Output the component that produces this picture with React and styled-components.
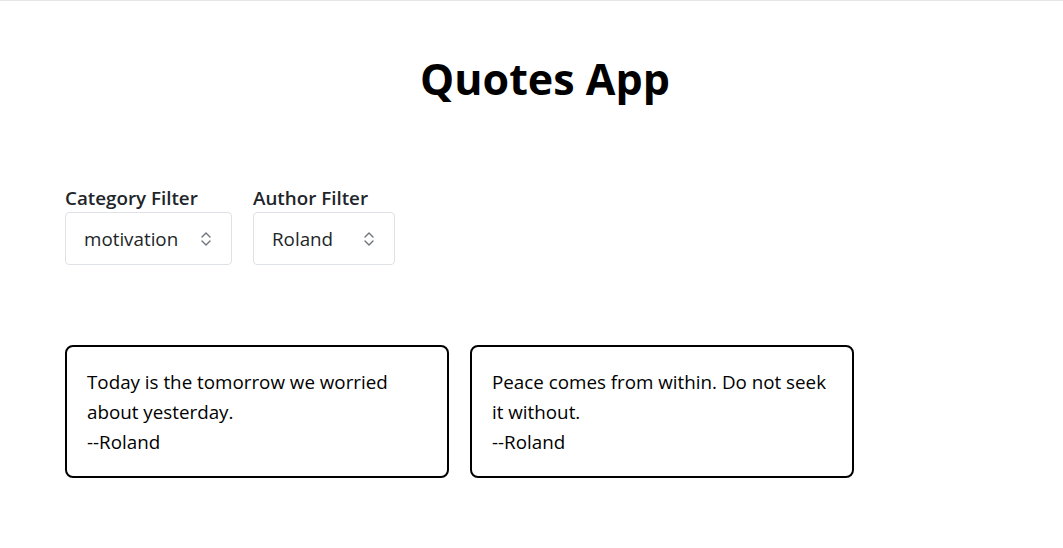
import React, { useState } from 'react';
import styled, { createGlobalStyle } from 'styled-components';

const GlobalStyle = createGlobalStyle`
  body {
    margin: 0;
    background: #fff;
    font-family: "Open Sans", "Noto Sans", sans-serif;
    color: #212529;
  }
`;

const quotes = [
  { id: 1, text: 'Today is the tomorrow we worried about yesterday.', author: 'Roland', category: 'motivation' },
  { id: 2, text: 'Peace comes from within. Do not seek it without.', author: 'Roland', category: 'motivation' },
];

const Page = styled.div`
  border-top: 1px solid #e6e6e6;
  padding: 0 38px 0 65px;
  min-height: 547px;
`;

const Title = styled.h1`
  margin: 0;
  padding-top: 48px;
  text-align: center;
  font-size: 43px;
  font-weight: 700;
  color: #000;
  line-height: 60px;
`;

const Filters = styled.div`
  display: flex;
  gap: 21px;
  margin-top: 78px;
`;

const FilterGroup = styled.div`
  display: flex;
  flex-direction: column;
  gap: 3px;
`;

const Label = styled.label`
  font-size: 18.8px;
  font-weight: 600;
  line-height: 22px;
  color: #212529;
`;

const SelectWrap = styled.div`
  position: relative;
  width: ${p => p.width}px;
`;

const Select = styled.select`
  appearance: none;
  width: 100%;
  height: 53px;
  padding: 0 36px 0 18px;
  font-family: inherit;
  font-size: 18.8px;
  color: #212529;
  background: #fff;
  border: 1px solid #dee2e6;
  border-radius: 4px;
  outline: none;
`;

const Chevron = styled.svg`
  position: absolute;
  right: 20px;
  top: 50%;
  transform: translateY(-50%);
  pointer-events: none;
`;

const Cards = styled.div`
  display: flex;
  gap: 21px;
  margin-top: 80px;
`;

const Card = styled.div`
  box-sizing: border-box;
  width: 384px;
  height: 133px;
  padding: 20px 20px;
  border: 2px solid #000;
  border-radius: 8px;
  font-size: 18.8px;
  line-height: 30px;
  color: #000;
`;

const SelectField = ({ label, value, options, width, onChange }) => (
  <FilterGroup>
    <Label>{label}</Label>
    <SelectWrap width={width}>
      <Select value={value} onChange={e => onChange(e.target.value)}>
        {options.map(o => <option key={o} value={o}>{o}</option>)}
      </Select>
      <Chevron width="12" height="18" viewBox="0 0 12 18" fill="none" stroke="#6c757d" strokeWidth="1.4" strokeLinecap="round" strokeLinejoin="round">
        <path d="M2 7l4-4 4 4" />
        <path d="M2 11l4 4 4-4" />
      </Chevron>
    </SelectWrap>
  </FilterGroup>
);

export default function App() {
  const [category, setCategory] = useState('motivation');
  const [author, setAuthor] = useState('Roland');

  const shown = quotes.filter(q => q.category === category && q.author === author);

  return (
    <Page>
      <GlobalStyle />
      <Title>Quotes App</Title>
      <Filters>
        <SelectField label="Category Filter" value={category} options={['motivation', 'life', 'love']} width={167} onChange={setCategory} />
        <SelectField label="Author Filter" value={author} options={['Roland', 'Anon']} width={142} onChange={setAuthor} />
      </Filters>
      <Cards>
        {shown.map(q => (
          <Card key={q.id}>
            {q.text}
            <br />
            --{q.author}
          </Card>
        ))}
      </Cards>
    </Page>
  );
}
